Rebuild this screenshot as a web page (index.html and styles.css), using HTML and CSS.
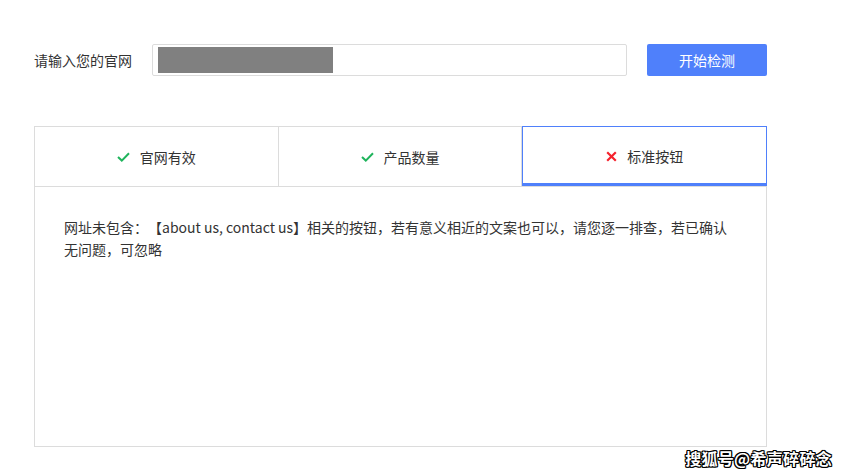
FILE: index.html
```html
<!DOCTYPE html>
<html lang="zh-CN">
<head>
    <meta charset="UTF-8">
    <meta name="viewport" content="width=device-width, initial-scale=1.0">
    <title>官网检测</title>
    <link rel="stylesheet" href="styles.css">
</head>
<body>
    <div class="page">
        <div class="search-row">
            <label class="label" for="site">请输入您的官网</label>
            <div class="input-box">
                <div class="masked"></div>
                <input id="site" type="text" class="input">
            </div>
            <button class="btn">开始检测</button>
        </div>

        <div class="result">
            <div class="tabs">
                <div class="tab">
                    <svg class="icon" width="13" height="10" viewBox="0 0 13 10"><path d="M1 5 L4.8 8.6 L12 1.2" fill="none" stroke="#1fb45c" stroke-width="2"/></svg>
                    <span>官网有效</span>
                </div>
                <div class="tab">
                    <svg class="icon" width="13" height="10" viewBox="0 0 13 10"><path d="M1 5 L4.8 8.6 L12 1.2" fill="none" stroke="#1fb45c" stroke-width="2"/></svg>
                    <span>产品数量</span>
                </div>
                <div class="tab active">
                    <svg class="icon" width="11" height="11" viewBox="0 0 11 11"><path d="M1.2 1.2 L9.8 9.8 M9.8 1.2 L1.2 9.8" fill="none" stroke="#f5222d" stroke-width="2.2"/></svg>
                    <span>标准按钮</span>
                </div>
            </div>
            <div class="panel">
                <p>网址未包含：【about us, contact us】相关的按钮，若有意义相近的文案也可以，请您逐一排查，若已确认<br>无问题，可忽略</p>
            </div>
        </div>
    </div>

    <div class="watermark">搜狐号@希声碎碎念</div>
</body>
</html>
```

FILE: styles.css
```css
body {
    margin: 0;
    background-color: #fff;
    color: #333;
    font-family: "Noto Sans CJK SC", "Microsoft YaHei", sans-serif;
    font-size: 14px;
    text-spacing-trim: space-all;
}
.page {
    width: 733px;
    padding: 44px 0 0 34px;
}
.search-row {
    display: flex;
    align-items: center;
    height: 32px;
}
.label {
    width: 118px;
    font-size: 14px;
    color: #333;
}
.input-box {
    position: relative;
    box-sizing: border-box;
    width: 475px;
    height: 32px;
    border: 1px solid #dcdcdc;
    border-radius: 2px;
    padding: 2px 5px;
}
.masked {
    width: 175px;
    height: 100%;
    background-color: #808080;
}
.input {
    position: absolute;
    left: 0;
    top: 0;
    width: 100%;
    height: 100%;
    border: none;
    background: transparent;
    outline: none;
}
.btn {
    margin-left: 20px;
    width: 120px;
    height: 32px;
    border: none;
    border-radius: 2px;
    background-color: #4f80fb;
    color: #fff;
    font-family: inherit;
    font-size: 14px;
    cursor: pointer;
}
.btn:hover {
    background-color: #3a6ff0;
}
.result {
    margin-top: 50px;
    box-sizing: border-box;
    height: 321px;
    border: 1px solid #dcdcdc;
    display: flex;
    flex-direction: column;
}
.tabs {
    display: flex;
    height: 59px;
    border-bottom: 1px solid #dcdcdc;
}
.tab {
    flex: 1;
    display: flex;
    align-items: center;
    justify-content: center;
    gap: 10px;
    border-right: 1px solid #dcdcdc;
    color: #333;
}
.tab:last-child {
    border-right: none;
}
.tab.active {
    box-sizing: border-box;
    margin: -1px -1px -1px 0;
    height: 60px;
    border: 1px solid #4f80fb;
    border-bottom: 3px solid #4f80fb;
    padding-top: 2px;
}
.icon {
    display: block;
}
.panel {
    padding: 29px 29px;
}
.panel p {
    margin: 0;
    line-height: 22px;
    font-size: 14px;
}
.watermark {
    position: absolute;
    right: 16px;
    top: 446px;
    color: #fff;
    font-size: 16px;
    font-weight: bold;
    letter-spacing: 0.3px;
    text-shadow: 1px 0 0 #000, -1px 0 0 #000, 0 1px 0 #000, 0 -1px 0 #000, 1px 1px 0 #000, -1px -1px 0 #000, 1px -1px 0 #000, -1px 1px 0 #000;
}
```
